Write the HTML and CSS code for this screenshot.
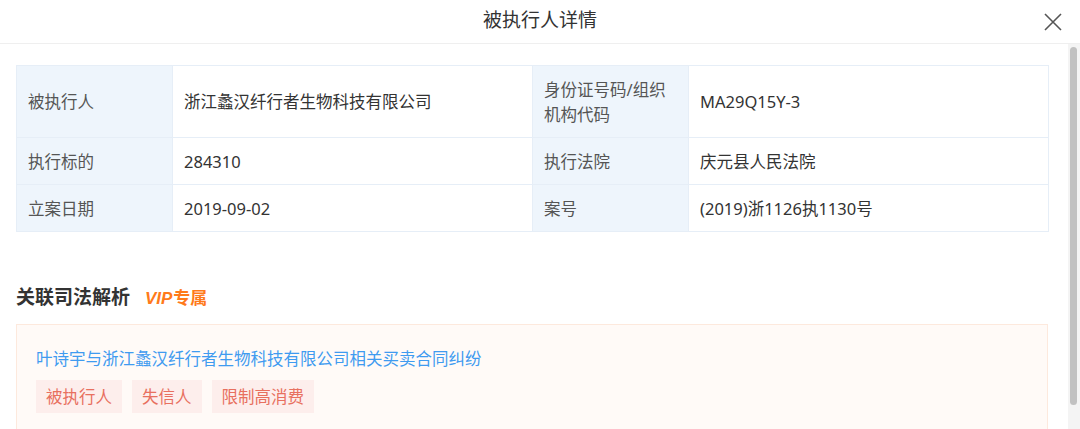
FILE: index.html
```html
<!DOCTYPE html>
<html lang="zh-CN">
<head>
  <meta charset="UTF-8">
  <meta name="viewport" content="width=device-width, initial-scale=1.0">
  <title>被执行人详情</title>
  <link rel="stylesheet" href="styles.css">
</head>
<body>
  <div class="dialog">
    <div class="dialog-header">
      <h1 class="dialog-title">被执行人详情</h1>
      <button class="close-btn" aria-label="关闭">
        <svg width="18" height="18" viewBox="0 0 18 18">
          <path d="M1 1 L17 17 M17 1 L1 17" stroke="#555" stroke-width="1.6" fill="none"/>
        </svg>
      </button>
    </div>

    <div class="dialog-main">
      <div class="dialog-body">
        <!-- 基本信息 -->
        <table class="info-table">
          <colgroup>
            <col class="col-label">
            <col class="col-value">
            <col class="col-label">
            <col class="col-value">
          </colgroup>
          <tr>
            <td class="label">被执行人</td>
            <td>浙江蠡汉纤行者生物科技有限公司</td>
            <td class="label">身份证号码/组织机构代码</td>
            <td>MA29Q15Y-3</td>
          </tr>
          <tr>
            <td class="label">执行标的</td>
            <td>284310</td>
            <td class="label">执行法院</td>
            <td>庆元县人民法院</td>
          </tr>
          <tr>
            <td class="label">立案日期</td>
            <td>2019-09-02</td>
            <td class="label">案号</td>
            <td>(2019)浙1126执1130号</td>
          </tr>
        </table>

        <!-- 关联司法解析 -->
        <div class="section-title">
          关联司法解析
          <span class="vip"><i>VIP</i>专属</span>
        </div>

        <div class="related-box">
          <a class="related-link" href="#">叶诗宇与浙江蠡汉纤行者生物科技有限公司相关买卖合同纠纷</a>
          <div class="tags">
            <span class="tag">被执行人</span>
            <span class="tag">失信人</span>
            <span class="tag">限制高消费</span>
          </div>
        </div>
      </div>

      <!-- scrollbar -->
      <div class="scrollbar">
        <div class="scrollbar-thumb"></div>
      </div>
    </div>
  </div>
</body>
</html>
```

FILE: styles.css
```css
* {
  box-sizing: border-box;
}
html, body {
  margin: 0;
  height: 100%;
  overflow: hidden;
}
body {
  font-family: "Noto Sans", "Noto Sans CJK SC", sans-serif;
  background: #fff;
  color: #333;
}
.dialog {
  display: flex;
  flex-direction: column;
  height: 100vh;
}

/* Header */
.dialog-header {
  flex: none;
  height: 44px;
  border-bottom: 1px solid #efefef;
  display: flex;
  align-items: center;
  justify-content: center;
  position: relative;
}
.dialog-title {
  margin: 0 0 4px;
  font-size: 19px;
  font-weight: normal;
  line-height: 26px;
  color: #333;
}
.close-btn {
  position: absolute;
  right: 18px;
  top: 13px;
  width: 18px;
  height: 18px;
  padding: 0;
  border: none;
  background: none;
  cursor: pointer;
}
.close-btn svg {
  display: block;
}

/* Body + scrollbar */
.dialog-main {
  flex: 1;
  display: flex;
  min-height: 0;
}
.dialog-body {
  flex: 1;
  overflow: hidden;
  padding: 21px 20px 20px 16px;
}
.scrollbar {
  flex: none;
  width: 12px;
  background: #f4f4f4;
  padding: 3px 3px 0 2px;
}
.scrollbar-thumb {
  height: 358px;
  background: #c1c1c1;
  border-radius: 4px;
}

/* Info table */
.info-table {
  width: 100%;
  border-collapse: collapse;
  table-layout: fixed;
  font-size: 16.5px;
}
.col-label {
  width: 156px;
}
.col-value {
  width: 360px;
}
.info-table td {
  border: 1px solid #e6eef7;
  padding: 10.5px 16px 10.5px 11px;
  line-height: 25px;
  vertical-align: middle;
  color: #333;
}
.info-table td.label {
  background: #eef5fc;
  color: #555;
}

/* Related section */
.section-title {
  margin-top: 52px;
  font-size: 19px;
  font-weight: bold;
  line-height: 26px;
  color: #333;
}
.vip {
  margin-left: 10px;
  font-size: 17px;
  color: #ff7a1a;
}
.vip i {
  font-family: "Liberation Sans", sans-serif;
  font-style: italic;
  margin-right: 1px;
}
.related-box {
  margin-top: 12px;
  border: 1px solid #fde9dd;
  background: #fffaf7;
  padding: 21px 19px 20px;
}
.related-link {
  display: block;
  font-size: 16.5px;
  line-height: 25px;
  color: #3f9bf0;
  text-decoration: none;
}
.tags {
  display: flex;
  gap: 10px;
  margin-top: 9px;
}
.tag {
  padding: 4px 10px;
  background: #fdeeec;
  color: #e8705f;
  font-size: 16.5px;
  line-height: 25px;
}
```
